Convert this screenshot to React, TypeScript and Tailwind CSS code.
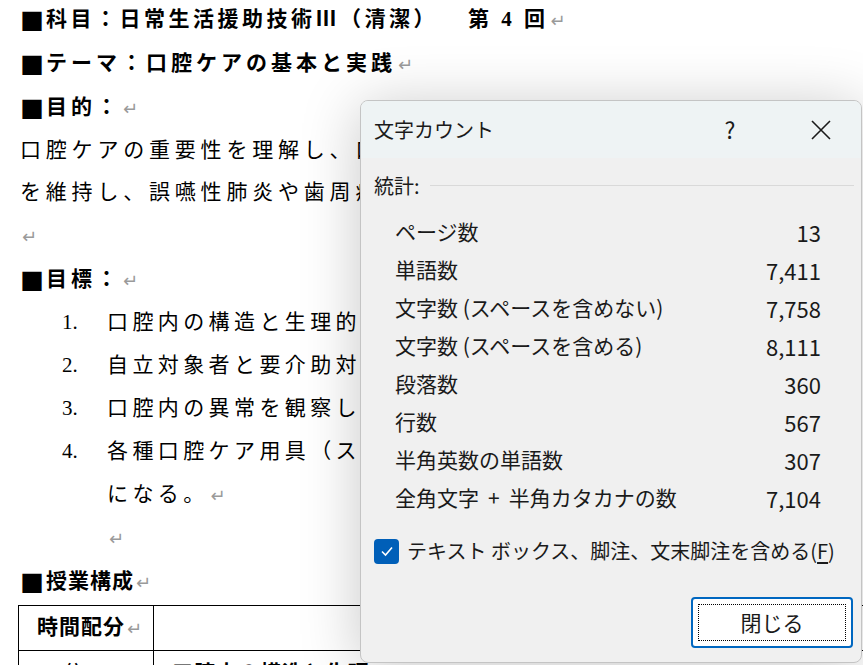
import React from "react";

const docFont = { fontFamily: '"Liberation Serif", "Noto Sans CJK JP", serif' };
const cjkFont = { fontFamily: '"Noto Sans CJK JP", sans-serif' };
const uiFont = { fontFamily: '"Noto Sans CJK JP", "Noto Sans", sans-serif' };

function Ret() {
  return (
    <span className="ml-[2px] inline-block align-middle text-[18px] font-normal tracking-normal text-[#9a9a9a]" style={{ fontFamily: '"DejaVu Sans", sans-serif' }}>
      ↵
    </span>
  );
}

function Sq() {
  return (
    <span className="text-[24px] leading-none tracking-[2px]" style={cjkFont}>
      ■
    </span>
  );
}

function Line({ h, children, className = "" }: { h: string; children: React.ReactNode; className?: string }) {
  return <div className={`flex items-center whitespace-nowrap ${h} ${className}`}>{children}</div>;
}

const stats: [React.ReactNode, string][] = [
  ["ページ数", "13"],
  ["単語数", "7,411"],
  ["文字数 (スペースを含めない)", "7,758"],
  ["文字数 (スペースを含める)", "8,111"],
  ["段落数", "360"],
  ["行数", "567"],
  ["半角英数の単語数", "307"],
  [
    <>
      全角文字<span className="mx-[9px]">+</span>半角カタカナの数
    </>,
    "7,104",
  ],
];

const goals = [
  "口腔内の構造と生理的機能について説明できる。",
  "自立対象者と要介助対象者の口腔ケアの違いを理解する。",
  "口腔内の異常を観察し、適切に報告できる。",
  "各種口腔ケア用具（スポンジブラシ等）を適切に使えるよう",
];

function WordCountDialog() {
  return (
    <div
      className="absolute left-[360px] top-[100px] flex h-[563px] w-[502px] flex-col overflow-hidden rounded-[8px] border border-[#c4c4c4] bg-[#f0f0f0] text-[#1a1a1a] shadow-[0_6px_60px_rgba(0,0,0,0.22)]"
      style={uiFont}
    >
      <div className="flex h-[57px] shrink-0 items-center bg-[#eef3f4] pl-[13px]">
        <span className="text-[20px]">文字カウント</span>
        <span className="ml-auto w-[20px] text-center text-[23px]">?</span>
        <span className="ml-[71px] mr-[30px] flex h-[20px] w-[20px] items-center justify-center">
          <svg width="20" height="20" viewBox="0 0 20 20">
            <path d="M1 1 L19 19 M19 1 L1 19" stroke="#1a1a1a" strokeWidth="1.6" />
          </svg>
        </span>
      </div>
      <div className="flex h-[55px] items-center pl-[13px] pr-[7px]">
        <span className="text-[20px]">統計:</span>
        <div className="ml-[10px] h-px flex-1 bg-[#d9d9d9]" />
      </div>
      <div className="flex flex-col pl-[34px] pr-[40px]">
        {stats.map(([label, value]) => (
          <div key={value} className="flex h-[38px] items-center justify-between text-[21px]">
            <span>{label}</span>
            <span className="text-[22px]">{value}</span>
          </div>
        ))}
      </div>
      <div className="mt-[19px] flex items-center pl-[13px]">
        <span className="flex h-[25px] w-[25px] items-center justify-center rounded-[4px] bg-[#005fb8]">
          <svg width="14" height="14" viewBox="0 0 14 14">
            <path d="M2 7.5 L5.5 11 L12 3.5" fill="none" stroke="#ffffff" strokeWidth="1.6" />
          </svg>
        </span>
        <span className="ml-[8px] text-[20px]">
          テキスト ボックス、脚注、文末脚注を含める(<span className="underline underline-offset-[3px]">F</span>)
        </span>
      </div>
      <div className="mt-[31px] flex justify-end pr-[8px]">
        <button
          type="button"
          className="flex h-[51px] w-[162px] items-center justify-center rounded-[4px] border-2 border-[#0067c0] bg-white p-[5px]"
        >
          <span className="flex h-full w-full items-center justify-center border border-dotted border-black text-[21px]">閉じる</span>
        </button>
      </div>
    </div>
  );
}

export default function App() {
  return (
    <div className="relative h-[665px] w-[863px] overflow-hidden bg-white text-black">
      <div className="pl-[20px] text-[21px] tracking-[4px]" style={docFont}>
        <Line h="h-[44px]" className="mt-[-2px] font-bold tracking-[3.5px]">
          <Sq />
          科目：日常生活援助技術Ⅲ（清潔）
          <span className="ml-[30px]">第 4 回</span>
          <Ret />
        </Line>
        <Line h="h-[44px]" className="font-bold">
          <Sq />
          テーマ：口腔ケアの基本と実践
          <Ret />
        </Line>
        <Line h="h-[44px]" className="font-bold">
          <Sq />
          目的：
          <Ret />
        </Line>
        <Line h="h-[42px]" className="tracking-[4.8px]">口腔ケアの重要性を理解し、口腔内の清潔を保つことで健康</Line>
        <Line h="h-[42px]" className="tracking-[4.8px]">を維持し、誤嚥性肺炎や歯周病を予防する技術を習得する。</Line>
        <Line h="h-[44px]">
          <Ret />
        </Line>
        <Line h="h-[44px]" className="font-bold">
          <Sq />
          目標：
          <Ret />
        </Line>
        {goals.map((g, i) => (
          <Line key={g} h={i % 2 === 0 ? "h-[42px]" : "h-[44px]"} className="pl-[42px]">
            <span className="w-[45px] tracking-normal">{i + 1}.</span>
            <span className="tracking-[4.4px]">{g}</span>
          </Line>
        ))}
        <Line h="h-[42px]" className="pl-[87px] tracking-[4.4px]">
          になる。
          <Ret />
        </Line>
        <Line h="h-[44px]" className="pl-[87px]">
          <Ret />
        </Line>
        <Line h="h-[44px]" className="font-bold tracking-[1px]">
          <Sq />
          授業構成
          <Ret />
        </Line>
      </div>
      <div className="ml-[18px] mt-px w-[900px] tracking-[1px]" style={docFont}>
        <div className="flex h-[46px] border border-black">
          <div className="flex w-[135px] items-center border-r border-black pl-[18px] text-[21px] font-bold">
            時間配分
            <Ret />
          </div>
          <div className="flex-1" />
        </div>
        <div className="flex h-[46px] border border-t-0 border-black">
          <div className="flex w-[135px] items-center border-r border-black pl-[14px] text-[21px]">
            10 分
            <Ret />
          </div>
          <div className="flex items-center pl-[18px] text-[21px] font-bold">口腔内の構造と生理</div>
        </div>
      </div>
      <WordCountDialog />
    </div>
  );
}
